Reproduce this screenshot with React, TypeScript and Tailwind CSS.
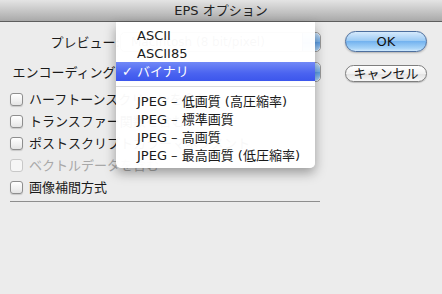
import React from "react";

const font = {
  fontFamily: '"DejaVu Sans", "Noto Sans CJK JP", sans-serif',
};

function Checkbox({ label, disabled }: { label: string; disabled?: boolean }) {
  return (
    <div className="flex h-[22px] items-center">
      <div
        className={
          disabled
            ? "h-[13px] w-[13px] rounded-[3px] border border-[#c8c8c8] bg-[#f6f6f6]"
            : "h-[13px] w-[13px] rounded-[3px] border border-[#8e8e8e] bg-[linear-gradient(to_bottom,#ffffff,#f0f0f0_60%,#e4e4e4)] shadow-[0_1px_1px_rgba(0,0,0,0.15)]"
        }
      />
      <span
        className={
          disabled
            ? "ml-[6px] whitespace-nowrap text-[13px] leading-none text-[#a8a8a8]"
            : "ml-[6px] whitespace-nowrap text-[13px] leading-none text-[#1a1a1a]"
        }
      >
        {label}
      </span>
    </div>
  );
}

function Popup({ value }: { value: string }) {
  return (
    <div className="flex h-[20px] w-[201px] items-center rounded-[5px] border border-[#9a9a9a] bg-white">
      <span className="flex-1 whitespace-nowrap pl-[10px] text-[12px] text-[#333]">{value}</span>
      <div className="h-full w-[18px] rounded-r-[5px] border-l border-[#5a7fae] bg-[linear-gradient(to_bottom,#c9e1f8,#78b2ec_50%,#5a9de6_51%,#b6d9f8)]" />
    </div>
  );
}

export default function App() {
  const menuItems = ["ASCII", "ASCII85"];
  const jpegItems = [
    "JPEG – 低画質 (高圧縮率)",
    "JPEG – 標準画質",
    "JPEG – 高画質",
    "JPEG – 最高画質 (低圧縮率)",
  ];

  return (
    <div
      className="relative h-[294px] w-[442px] overflow-hidden bg-[#ececec] text-[#1a1a1a]"
      style={font}
    >
      {/* Title bar */}
      <div className="flex h-[22px] items-center justify-center border-b border-[#5e5e5e] bg-[linear-gradient(to_bottom,#e4e4e4,#c4c4c4_55%,#a9a9a9)]">
        <span className="text-[13px] text-[#222]">EPS オプション</span>
      </div>

      <div className="flex">
        {/* Left column */}
        <div className="ml-[10px] w-[311px]">
          <div className="mt-[10px] flex items-center">
            <span className="w-[110px] whitespace-nowrap text-right text-[13px] leading-none">
              プレビュー:
            </span>
            <Popup value="Macintosh (8 bit/pixel)" />
          </div>
          <div className="mt-[10px] flex items-center">
            <span className="w-[110px] whitespace-nowrap text-right text-[13px] leading-none">
              エンコーディング:
            </span>
            <Popup value="バイナリ" />
          </div>
          <div className="mt-[6px]">
            <Checkbox label="ハーフトーンスクリーンを含む" />
            <Checkbox label="トランスファー関数を含む" />
            <Checkbox label="ポストスクリプトカラーマネジメント" />
            <Checkbox label="ベクトルデータを含む" disabled />
            <Checkbox label="画像補間方式" />
          </div>
          <div className="mt-[3px] h-px w-[310px] bg-[#8e8e8e]" />
        </div>

        {/* Buttons */}
        <div className="ml-[24px] flex flex-col">
          <button className="mt-[9px] h-[21px] w-[82px] rounded-full border border-[#4d6f9e] bg-[linear-gradient(to_bottom,#d6eafc,#9dcbf4_45%,#74b3ef_50%,#a6d3f8_85%,#cfe8fd)] text-[13px] leading-none text-[#111] shadow-[0_1px_2px_rgba(0,0,0,0.25)]">
            OK
          </button>
          <button className="mt-[13px] h-[17px] w-[82px] rounded-full border border-[#7e7e7e] bg-[linear-gradient(to_bottom,#ffffff,#f1f1f1_50%,#e2e2e2_51%,#f7f7f7)] text-[13px] leading-none text-[#111] shadow-[0_1px_1px_rgba(0,0,0,0.2)]">
            キャンセル
          </button>
        </div>
      </div>

      {/* Open popup menu */}
      <div className="absolute left-[116px] top-[22px] w-[199px] rounded-b-[5px] bg-white/[0.97] py-[4px] shadow-[0_5px_12px_rgba(0,0,0,0.35)]">
        {menuItems.map((item) => (
          <div key={item} className="flex h-[18px] items-center pl-[21px] text-[13px] leading-none">
            {item}
          </div>
        ))}
        <div className="flex h-[19px] items-center bg-[linear-gradient(to_bottom,#7189f7,#4a63f0_60%,#3c56ec)] text-[13px] leading-none text-white">
          <span className="w-[21px] pl-[6px]">✓</span>
          <span>バイナリ</span>
        </div>
        <div className="flex h-[11px] items-center">
          <div className="h-px w-full bg-[#dadada]" />
        </div>
        {jpegItems.map((item) => (
          <div key={item} className="flex h-[18px] items-center pl-[21px] text-[13px] leading-none">
            {item}
          </div>
        ))}
      </div>
    </div>
  );
}
